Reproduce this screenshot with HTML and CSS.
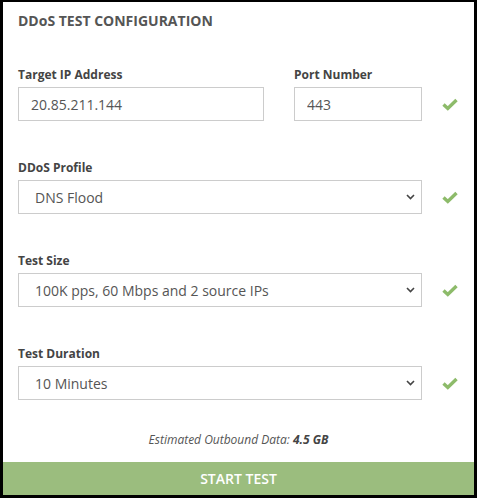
FILE: index.html
```html
<!DOCTYPE html>
<html>
<head>
<meta charset="utf-8">
<link rel="stylesheet" href="styles.css">
</head>
<body>
<div class="frame">
  <div class="content">
    <h1 class="title">DDoS TEST CONFIGURATION</h1>

    <div class="row">
      <div class="field field-ip">
        <label class="label">Target IP Address</label>
        <input class="control" type="text" value="20.85.211.144">
      </div>
      <div class="field field-port">
        <label class="label">Port Number</label>
        <input class="control" type="text" value="443">
      </div>
      <div class="check"><svg width="16" height="13" viewBox="0 0 16 13"><path d="M1.5 6.5 L5.8 10.5 L14.5 2" fill="none" stroke="#8dbb6a" stroke-width="3.4"/></svg></div>
    </div>

    <div class="row">
      <div class="field field-full">
        <label class="label">DDoS Profile</label>
        <div class="select-wrap">
          <select class="control select"><option>DNS Flood</option></select>
          <svg class="chev" width="9" height="6" viewBox="0 0 9 6"><path d="M1 1 L4.5 4.5 L8 1" fill="none" stroke="#444" stroke-width="1.6"/></svg>
        </div>
      </div>
      <div class="check"><svg width="16" height="13" viewBox="0 0 16 13"><path d="M1.5 6.5 L5.8 10.5 L14.5 2" fill="none" stroke="#8dbb6a" stroke-width="3.4"/></svg></div>
    </div>

    <div class="row">
      <div class="field field-full">
        <label class="label">Test Size</label>
        <div class="select-wrap">
          <select class="control select"><option>100K pps, 60 Mbps and 2 source IPs</option></select>
          <svg class="chev" width="9" height="6" viewBox="0 0 9 6"><path d="M1 1 L4.5 4.5 L8 1" fill="none" stroke="#444" stroke-width="1.6"/></svg>
        </div>
      </div>
      <div class="check"><svg width="16" height="13" viewBox="0 0 16 13"><path d="M1.5 6.5 L5.8 10.5 L14.5 2" fill="none" stroke="#8dbb6a" stroke-width="3.4"/></svg></div>
    </div>

    <div class="row">
      <div class="field field-full">
        <label class="label">Test Duration</label>
        <div class="select-wrap">
          <select class="control select"><option>10 Minutes</option></select>
          <svg class="chev" width="9" height="6" viewBox="0 0 9 6"><path d="M1 1 L4.5 4.5 L8 1" fill="none" stroke="#444" stroke-width="1.6"/></svg>
        </div>
      </div>
      <div class="check"><svg width="16" height="13" viewBox="0 0 16 13"><path d="M1.5 6.5 L5.8 10.5 L14.5 2" fill="none" stroke="#8dbb6a" stroke-width="3.4"/></svg></div>
    </div>

    <p class="estimate">Estimated Outbound Data: <b>4.5 GB</b></p>
  </div>
  <button class="start">START TEST</button>
</div>
</body>
</html>
```

FILE: styles.css
```css
* { box-sizing: border-box; }
html, body { margin: 0; padding: 0; background: #000; }
body { font-family: "Open Sans", "Noto Sans", sans-serif; }

.frame {
  width: 477px;
  height: 498px;
  border-style: solid;
  border-color: #000;
  border-width: 2px 3px 3px 3px;
  background: #fff;
  display: flex;
  flex-direction: column;
}

.content {
  flex: 1;
  padding: 9px 0 0 15px;
}

.title {
  margin: 0 0 36px 0;
  font-size: 14px;
  line-height: 20px;
  font-weight: 700;
  color: #555;
}

.row {
  display: flex;
  align-items: flex-end;
  margin-bottom: 39px;
}

.field { display: flex; flex-direction: column; flex-shrink: 0; }
.field-ip { width: 246px; margin-right: 30px; }
.field-port { width: 128px; }
.field-full { width: 404px; }

.label {
  font-size: 12px;
  line-height: 16px;
  font-weight: 700;
  color: #444;
  margin-bottom: 4px;
}

.control {
  height: 34px;
  border: 1px solid #ccc;
  border-radius: 0;
  padding: 0 12px;
  font-family: "Open Sans", "Noto Sans", sans-serif;
  font-size: 14px;
  color: #555;
  background: #fff;
  outline: none;
  width: 100%;
}

.select-wrap { position: relative; }
.select {
  appearance: none;
  -webkit-appearance: none;
  display: block;
  padding-left: 16px;
}
.chev {
  position: absolute;
  right: 7px;
  top: 14px;
}

.check {
  flex-shrink: 0;
  width: 40px;
  height: 34px;
  display: flex;
  align-items: center;
  padding-left: 20px;
}

.estimate {
  margin: -7px 0 0 -15px;
  text-align: center;
  font-size: 12px;
  line-height: 16px;
  font-style: italic;
  color: #555;
}
.estimate b { font-weight: 700; color: #444; }

.start {
  height: 33px;
  border: none;
  background: #9bbd7e;
  color: #fff;
  font-family: "Open Sans", "Noto Sans", sans-serif;
  font-size: 14px;
  font-weight: 600;
  width: 100%;
  padding: 0;
}
```
